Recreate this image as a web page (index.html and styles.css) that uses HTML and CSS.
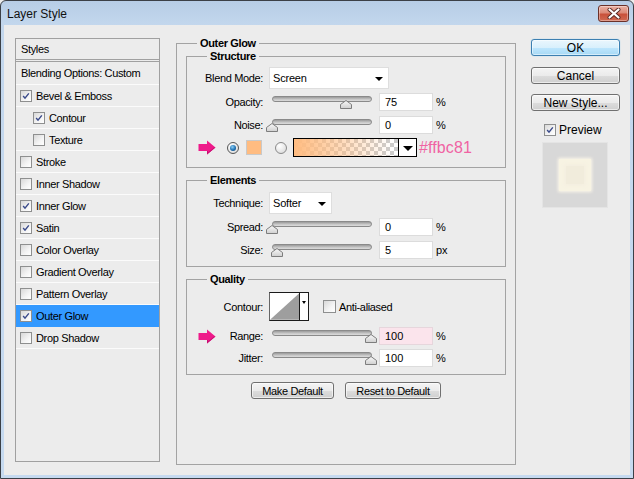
FILE: index.html
```html
<!DOCTYPE html>
<html>
<head>
<meta charset="utf-8">
<title>Layer Style</title>
<link rel="stylesheet" href="styles.css">
</head>
<body>
<div class="window">
  <div class="titlebar">
    <span class="title">Layer Style</span>
    <span class="close"><svg width="14" height="11" viewBox="0 0 14 11"><path d="M2.5 1.5 L11.5 9.5 M11.5 1.5 L2.5 9.5" stroke="#5a2a24" stroke-width="4" stroke-linecap="round"/><path d="M2.5 1.5 L11.5 9.5 M11.5 1.5 L2.5 9.5" stroke="#fff" stroke-width="2.2" stroke-linecap="round"/></svg></span>
  </div>
  <div class="body">
    <div class="styles-panel">
      <div class="sp-head">Styles</div>
      <div class="sp-row sp-blend">Blending Options: Custom</div>
      <div class="sp-row"><span class="cb"><svg viewBox="0 0 12 12"><path d="M2.6 6 L4.8 8.6 L9.4 2.8" class="tick"/></svg></span>Bevel &amp; Emboss</div>
      <div class="sp-row sp-sub"><span class="cb"><svg viewBox="0 0 12 12"><path d="M2.6 6 L4.8 8.6 L9.4 2.8" class="tick"/></svg></span>Contour</div>
      <div class="sp-row sp-sub"><span class="cb"></span>Texture</div>
      <div class="sp-row"><span class="cb"></span>Stroke</div>
      <div class="sp-row"><span class="cb"></span>Inner Shadow</div>
      <div class="sp-row"><span class="cb"><svg viewBox="0 0 12 12"><path d="M2.6 6 L4.8 8.6 L9.4 2.8" class="tick"/></svg></span>Inner Glow</div>
      <div class="sp-row"><span class="cb"><svg viewBox="0 0 12 12"><path d="M2.6 6 L4.8 8.6 L9.4 2.8" class="tick"/></svg></span>Satin</div>
      <div class="sp-row"><span class="cb"></span>Color Overlay</div>
      <div class="sp-row"><span class="cb"></span>Gradient Overlay</div>
      <div class="sp-row"><span class="cb"></span>Pattern Overlay</div>
      <div class="sp-row sp-active"><span class="cb"><svg viewBox="0 0 12 12"><path d="M2.6 6 L4.8 8.6 L9.4 2.8" class="tick"/></svg></span>Outer Glow</div>
      <div class="sp-row"><span class="cb"></span>Drop Shadow</div>
    </div>

    <fieldset class="group outer">
      <legend>Outer Glow</legend>

      <fieldset class="group sub structure">
        <legend>Structure</legend>
        <div class="row row-select">
          <span class="lbl">Blend Mode:</span>
          <span class="select sel-blend">Screen<i class="caret"></i></span>
        </div>
        <div class="row row-slider gap5">
          <span class="lbl">Opacity:</span>
          <span class="slider"><span class="track"></span><svg class="thumb" style="left:77px" width="12" height="9" viewBox="0 0 12 9"><defs><linearGradient id="tg1" x1="0" y1="0" x2="0" y2="1"><stop offset="0" stop-color="#fafafa"/><stop offset="1" stop-color="#cfcfcf"/></linearGradient></defs><path d="M0.5 8.5 V4.5 L6 0.5 L11.5 4.5 V8.5 Z" fill="url(#tg1)" stroke="#7d7d7d"/></svg></span>
          <span class="num">75</span><span class="unit">%</span>
        </div>
        <div class="row row-slider gap5">
          <span class="lbl">Noise:</span>
          <span class="slider"><span class="track"></span><svg class="thumb" style="left:3px" width="12" height="9" viewBox="0 0 12 9"><path d="M0.5 8.5 V4.5 L6 0.5 L11.5 4.5 V8.5 Z" fill="url(#tg1)" stroke="#7d7d7d"/></svg></span>
          <span class="num">0</span><span class="unit">%</span>
        </div>
        <div class="row row-color gap4">
          <svg class="arrow" width="18" height="15" viewBox="0 0 18 15"><polygon points="0.5,4 9,4 9,0.5 17.5,7.5 9,14.5 9,11 0.5,11" fill="#ee1a8a"/><polygon points="9,11 9,14.5 17.5,7.5 16,7.5 10,12.6 10,11" fill="#c70f72"/></svg>
          <span class="radio on"><span class="dot"></span></span>
          <span class="swatch"></span>
          <span class="radio"></span>
          <span class="gradient"><span class="grad-fill"></span><span class="grad-drop"><i class="caret big"></i></span></span>
          <span class="hex">#ffbc81</span>
        </div>
      </fieldset>

      <fieldset class="group sub elements">
        <legend>Elements</legend>
        <div class="row row-select">
          <span class="lbl">Technique:</span>
          <span class="select sel-tech">Softer<i class="caret"></i></span>
        </div>
        <div class="row row-slider gap5">
          <span class="lbl">Spread:</span>
          <span class="slider"><span class="track"></span><svg class="thumb" style="left:3px" width="12" height="9" viewBox="0 0 12 9"><path d="M0.5 8.5 V4.5 L6 0.5 L11.5 4.5 V8.5 Z" fill="url(#tg1)" stroke="#7d7d7d"/></svg></span>
          <span class="num">0</span><span class="unit">%</span>
        </div>
        <div class="row row-slider gap5">
          <span class="lbl">Size:</span>
          <span class="slider"><span class="track"></span><svg class="thumb" style="left:8px" width="12" height="9" viewBox="0 0 12 9"><path d="M0.5 8.5 V4.5 L6 0.5 L11.5 4.5 V8.5 Z" fill="url(#tg1)" stroke="#7d7d7d"/></svg></span>
          <span class="num">5</span><span class="unit">px</span>
        </div>
      </fieldset>

      <fieldset class="group sub quality">
        <legend>Quality</legend>
        <div class="row row-contour">
          <span class="lbl">Contour:</span>
          <span class="contour"><svg class="curve" width="30" height="27" viewBox="0 0 30 27"><polygon points="0,27 30,0 30,27" fill="#9e9e9e"/></svg><span class="contour-drop"><i class="caret small"></i></span></span>
          <span class="cb cb13"></span><span class="cb-label">Anti-aliased</span>
        </div>
        <div class="row row-slider gap6">
          <span class="lbl lbl-arrow"><svg class="arrow" width="18" height="15" viewBox="0 0 18 15"><polygon points="0.5,4 9,4 9,0.5 17.5,7.5 9,14.5 9,11 0.5,11" fill="#ee1a8a"/><polygon points="9,11 9,14.5 17.5,7.5 16,7.5 10,12.6 10,11" fill="#c70f72"/></svg><span>Range:</span></span>
          <span class="slider"><span class="track"></span><svg class="thumb" style="left:102px" width="12" height="9" viewBox="0 0 12 9"><path d="M0.5 8.5 V4.5 L6 0.5 L11.5 4.5 V8.5 Z" fill="url(#tg1)" stroke="#7d7d7d"/></svg></span>
          <span class="num num-pink">100</span><span class="unit">%</span>
        </div>
        <div class="row row-slider gap4">
          <span class="lbl">Jitter:</span>
          <span class="slider"><span class="track"></span><svg class="thumb" style="left:102px" width="12" height="9" viewBox="0 0 12 9"><path d="M0.5 8.5 V4.5 L6 0.5 L11.5 4.5 V8.5 Z" fill="url(#tg1)" stroke="#7d7d7d"/></svg></span>
          <span class="num">100</span><span class="unit">%</span>
        </div>
      </fieldset>

      <div class="defaults">
        <span class="btn btn-make">Make Default</span>
        <span class="btn btn-reset">Reset to Default</span>
      </div>
    </fieldset>

    <div class="side">
      <span class="btn btn-side btn-ok">OK</span>
      <span class="btn btn-side btn-cancel">Cancel</span>
      <span class="btn btn-side btn-new">New Style...</span>
      <div class="preview-row"><span class="cb"><svg viewBox="0 0 12 12"><path d="M2.6 6 L4.8 8.6 L9.4 2.8" class="tick"/></svg></span><span>Preview</span></div>
      <div class="preview"><span class="preview-sq"><span class="preview-in"></span></span></div>
    </div>
  </div>
</div>
</body>
</html>
```
FILE: styles.css
```css
* { box-sizing: border-box; }
html, body { margin: 0; padding: 0; background: #ececec; }
body {
  font-family: "Liberation Sans", Arial, sans-serif;
  font-size: 11px;
  letter-spacing: -0.35px;
  color: #000;
}
.window {
  width: 634px;
  height: 479px;
  border: 1px solid #3b4047;
  border-radius: 6px 6px 0 0;
  background: linear-gradient(#b7cde6 0px, #c3d7ed 24px, #c6daf0 100%);
  display: flex;
  flex-direction: column;
  overflow: hidden;
}
.titlebar {
  height: 24px;
  flex: none;
  display: flex;
  align-items: flex-start;
}
.title {
  font-size: 12px;
  letter-spacing: 0;
  margin: 6px 0 0 6px;
  line-height: 15px;
  color: #111;
}
.close {
  margin: 4px 4px 0 auto;
  width: 31px;
  height: 17px;
  border: 1px solid #6b3129;
  border-radius: 3px;
  background: linear-gradient(#eab1a4 0%, #dc8a78 45%, #c9513b 55%, #d06a52 100%);
  display: flex;
  align-items: center;
  justify-content: center;
  box-shadow: inset 0 0 0 1px rgba(255,255,255,0.35);
}
.body {
  flex: 1;
  margin: 0 3px 3px 3px;
  background: #ececec;
  display: flex;
  align-items: flex-start;
}

/* left styles list */
.styles-panel {
  margin: 13px 0 0 11px;
  width: 145px;
  height: 424px;
  border: 1px solid #a0a0a0;
  flex: none;
}
.sp-head {
  height: 23px;
  line-height: 20px;
  padding-left: 5px;
  border-bottom: 3px double #a0a0a0;
}
.sp-row {
  height: 22px;
  border-bottom: 1px solid #fbfbfb;
  display: flex;
  align-items: center;
  padding-left: 4px;
}
.sp-blend { height: 23px; padding-left: 5px; }
.sp-sub { padding-left: 17px; }
.sp-active { background: #3399ff; border-bottom-color: #3399ff; }
.cb {
  width: 12px;
  height: 12px;
  border: 1px solid #8e8f8f;
  background: linear-gradient(135deg, #d8d8d8, #f4f4f4 60%, #ffffff);
  margin-right: 4px;
  flex: none;
  display: inline-flex;
}
.cb svg { width: 10px; height: 10px; }
.tick { fill: none; stroke: #3a4a8a; stroke-width: 1.7; }
.cb13 { width: 13px; height: 13px; }

/* group boxes */
.group {
  border: 1px solid #a3a3a3;
  margin: 0;
  min-width: 0;
}
.group legend {
  font-weight: bold;
  line-height: 13px;
  padding: 0 3px;
}
.outer {
  margin: 12px 0 0 16px;
  width: 340px;
  height: 428px;
  padding: 0 9px;
  flex: none;
}
.outer > legend { margin-left: 11px; }
.sub { padding: 0; }
.sub > legend { margin-left: 20px; }
.structure { padding: 4px 0 10px 0; }
.elements { margin-top: 6px; padding: 5px 0 7px 0; }
.quality { margin-top: 6px; padding: 6px 0 7px 0; }

.row { display: flex; align-items: center; }
.gap4 { margin-top: 4px; }
.gap5 { margin-top: 5px; }
.gap6 { margin-top: 6px; }
.lbl {
  width: 76px;
  margin-right: 6px;
  text-align: right;
  flex: none;
}
.lbl-arrow { display: flex; align-items: center; justify-content: space-between; }
.lbl-arrow .arrow { margin-left: 11px; }
.row-select { height: 21px; }
.select {
  position: relative;
  height: 22px;
  background: #fff;
  border: 1px solid #dedede;
  padding-left: 3px;
  line-height: 20px;
  letter-spacing: -0.2px;
}
.sel-blend { width: 120px; }
.sel-tech { width: 63px; }
.caret {
  position: absolute;
  top: 9px;
  right: 5px;
  width: 0;
  height: 0;
  border-left: 4px solid transparent;
  border-right: 4px solid transparent;
  border-top: 4px solid #000;
}
.row-slider { height: 18px; }
.slider {
  position: relative;
  width: 110px;
  height: 18px;
  flex: none;
}
.track {
  display: block;
  margin: 3px 0 0 3px;
  width: 100px;
  height: 6px;
  border-radius: 3px;
  border: 1px solid #8a8a8a;
  background: linear-gradient(#9a9a9a, #c8c8c8 60%, #dcdcdc);
}
.thumb {
  position: absolute;
  top: 7px;
  margin-left: -6px;
}
.num {
  width: 54px;
  height: 18px;
  background: #fff;
  border: 1px solid #dcdcdc;
  padding-left: 5px;
  line-height: 16px;
  letter-spacing: 0;
  flex: none;
}
.num-pink { background: #fbe4ec; border-color: #e6d6dc; }
.unit { margin-left: 3px; letter-spacing: 0; }

.row-color { height: 19px; }
.row-color .arrow { margin-left: 11px; }
.radio {
  width: 12px;
  height: 12px;
  border-radius: 50%;
  border: 1px solid #8a8a8a;
  background: radial-gradient(circle at 35% 30%, #ffffff, #e2e2e2 70%, #cfcfcf);
  margin-left: 13px;
  display: inline-flex;
  align-items: center;
  justify-content: center;
  flex: none;
}
.radio.on { margin-left: 11px; border-color: #555; }
.dot {
  width: 6px;
  height: 6px;
  border-radius: 50%;
  background: radial-gradient(circle at 40% 35%, #8fd0f5, #1f72b4 55%, #0c3862);
}
.swatch {
  width: 16px;
  height: 15px;
  background: #ffbc81;
  border: 1px solid #c9c9c9;
  margin-left: 7px;
  flex: none;
}
.gradient {
  margin-left: 6px;
  width: 124px;
  height: 19px;
  border: 1px solid #000;
  display: flex;
  flex: none;
}
.grad-fill {
  flex: 1;
  background:
    linear-gradient(to right, #ffbc81, rgba(255,188,129,0.55) 45%, rgba(255,188,129,0) 95%),
    repeating-conic-gradient(#cccccc 0 25%, #ffffff 0 50%) 0 0 / 8px 8px;
}
.grad-drop {
  position: relative;
  width: 18px;
  border-left: 1px solid #000;
  background: #fff;
}
.caret.big {
  top: 7px;
  right: 3px;
  border-left-width: 5px;
  border-right-width: 5px;
  border-top-width: 5px;
}
.hex {
  margin-left: 2px;
  font-size: 16px;
  letter-spacing: 0.1px;
  color: #f063a3;
  line-height: 19px;
}

.row-contour { height: 29px; }
.contour {
  display: flex;
  width: 40px;
  height: 29px;
  border: 1px solid #1a1a1a;
  border-left-color: #666;
  background: #fff;
  flex: none;
}
.curve { display: block; }
.contour-drop {
  position: relative;
  width: 9px;
  border-left: 1px solid #1a1a1a;
}
.caret.small {
  top: 8px;
  right: 2px;
  border-left-width: 2px;
  border-right-width: 2px;
  border-top-width: 3px;
}
.row-contour .cb { margin-left: 14px; margin-right: 3px; }

.defaults {
  display: flex;
  justify-content: center;
  gap: 11px;
  margin-top: 7px;
}
.btn {
  height: 17px;
  border: 1px solid #707070;
  border-radius: 3px;
  background: linear-gradient(#f4f4f4 0%, #ebebeb 50%, #dddddd 51%, #cfcfcf 100%);
  display: inline-flex;
  align-items: center;
  justify-content: center;
  box-shadow: inset 0 0 0 1px rgba(255,255,255,0.6);
}
.btn-make { width: 83px; }
.btn-reset { width: 96px; }

/* right column */
.side {
  margin: 14px 0 0 15px;
  width: 89px;
  display: flex;
  flex-direction: column;
  flex: none;
}
.btn-side {
  font-size: 12px;
  letter-spacing: 0;
  width: 89px;
}
.btn-ok {
  border-color: #3c7fb1;
  background: linear-gradient(#eaf6fd 0%, #d9f0fc 50%, #bee6fd 51%, #a7d9f5 100%);
  box-shadow: inset 0 0 0 1px rgba(255,255,255,0.5), 0 0 1px #6bc2f0;
}
.btn-cancel { margin-top: 11px; }
.btn-new { margin-top: 10px; }
.preview-row {
  margin-top: 12px;
  margin-left: 13px;
  display: flex;
  align-items: center;
  font-size: 12px;
  letter-spacing: 0;
  height: 13px;
}
.preview-row .cb { margin-right: 3px; }
.preview {
  margin: 6px 0 0 11px;
  width: 66px;
  height: 66px;
  background: #d8d8d8;
  border: 1px solid #e4e4e4;
  display: flex;
  align-items: center;
  justify-content: center;
}
.preview-sq {
  width: 32px;
  height: 32px;
  background: #f7f3e3;
  box-shadow: 0 0 3px 1px rgba(255, 250, 235, 0.9);
  display: flex;
  align-items: center;
  justify-content: center;
}
.preview-in {
  width: 18px;
  height: 18px;
  background: #f1ecdc;
  box-shadow: 0 0 4px 2px #f4efe0;
}
```
